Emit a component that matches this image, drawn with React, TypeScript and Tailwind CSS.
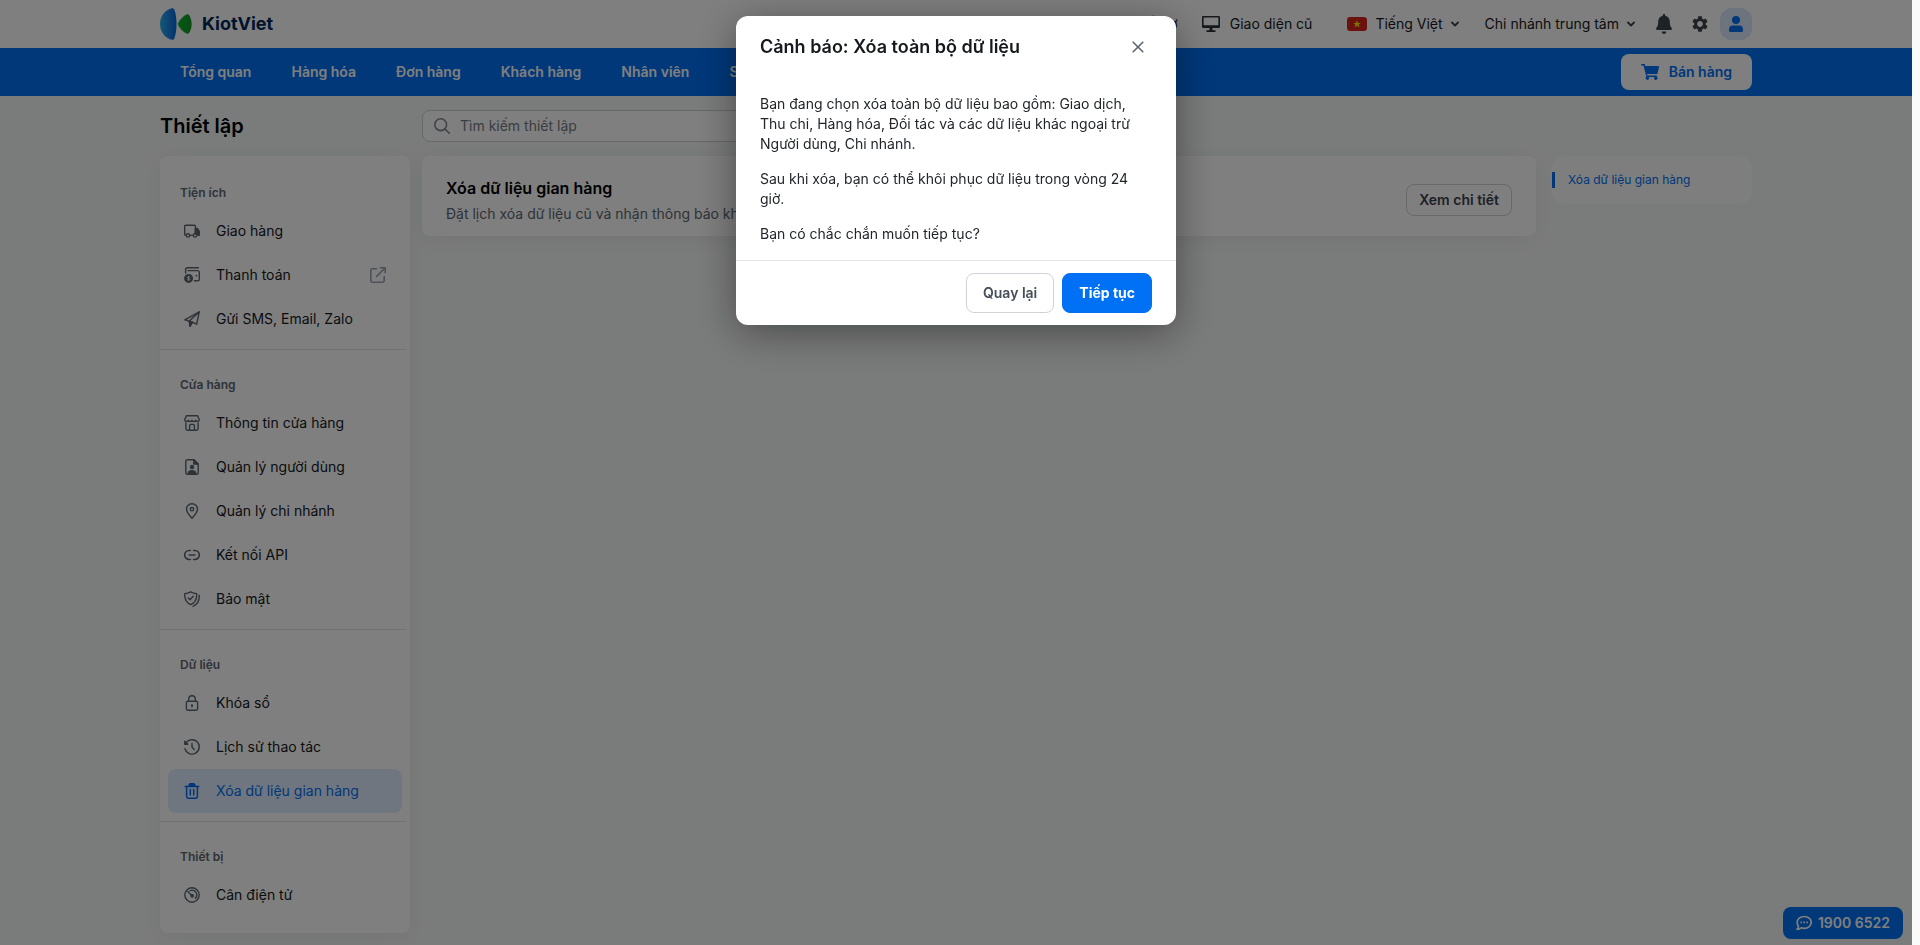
import React from 'react';

type IconProps = { className?: string };

const Stroke = ({ children, className = 'w-4 h-4' }: { children: React.ReactNode; className?: string }) => (
  <svg className={`${className} shrink-0`} viewBox="0 0 16 16" fill="none" stroke="currentColor" strokeWidth="1.4" strokeLinecap="round" strokeLinejoin="round" aria-hidden="true">
    {children}
  </svg>
);

const TruckIcon = () => (
  <Stroke>
    <path d="M2.2 12.4H1.7a1 1 0 0 1-1-1V3.200a1 1 0 0 1 1-1h8.700a1 1 0 0 1 1 1v8.400M5.800 12.400h3" />
    <path d="M11.400 5.400h2l1.900 3v3.800h-1.200l-2.700-1z" fill="currentColor" />
    <circle cx="4" cy="12.400" r="1.700" />
    <circle cx="11" cy="12.400" r="1.700" fill="#fff" />
  </Stroke>
);

const PaymentIcon = () => (
  <Stroke>
    <path d="M1.600 6V2.600a1.800 1.800 0 0 1 1.800-1.800h11M4 3.600h9.500a1.800 1.800 0 0 1 1.800 1.800v6.800a1.600 1.600 0 0 1-1.600 1.600h-3.300" />
    <path d="M12.200 8.800h.4" strokeWidth="1.600" />
    <circle cx="4.600" cy="11.400" r="3.800" fill="currentColor" />
    <path d="M5.800 10.200c-.5-.7-2.300-.6-2.300.3s2.300.7 2.300 1.800-1.900 1-2.400.3M4.600 9.200v4.400" stroke="#fff" strokeWidth=".8" />
  </Stroke>
);

const SendIcon = () => (
  <Stroke>
    <path d="M15.200.9 12.700 13.200 8.200 11.100 6 15.100 5.300 10.100.8 8.800z" />
    <path d="M15.200.9 5.300 10.100M8.200 11.100l-2.200 4" />
    <path d="M5.300 10.100 8.200 11.100 6 15.100z" fill="currentColor" />
  </Stroke>
);

const StoreIcon = () => (
  <Stroke>
    <path d="M2.400.8h11.200l1.700 4c0 2.200-3.100 2.200-3.700.4-.5 1.800-3.100 1.800-3.600 0-.5 1.800-3.100 1.800-3.600 0C3.800 7 .7 7 .7 4.800z" />
    <path d="M1.900 8v5.600a1.600 1.600 0 0 0 1.600 1.600h9a1.600 1.600 0 0 0 1.600-1.600V8M5.600 15v-4.400a1.200 1.200 0 0 1 1.200-1.200h2.400a1.200 1.200 0 0 1 1.200 1.200V15" />
  </Stroke>
);

const UserFileIcon = () => (
  <Stroke>
    <path d="M9.800.8H3.200a1.400 1.400 0 0 0-1.400 1.400v11.600a1.400 1.400 0 0 0 1.400 1.400h9.600a1.400 1.400 0 0 0 1.400-1.400V5z" />
    <path d="M9.800.8V5h4.400z" fill="currentColor" />
    <circle cx="8" cy="8" r="1.500" fill="currentColor" />
    <path d="M4.200 14.800c0-4.300 7.600-4.300 7.600 0z" fill="currentColor" />
  </Stroke>
);

const PinIcon = () => (
  <Stroke>
    <path d="M8 15.200C5 12 2.500 9.300 2.500 6.200a5.500 5.500 0 0 1 11 0c0 3.100-2.500 5.800-5.500 9z" />
    <circle cx="8" cy="6.200" r="1.700" />
  </Stroke>
);

const LinkIcon = () => (
  <Stroke>
    <path d="M6.400 3.500H5.200a4.500 4.500 0 0 0 0 9h1.200M9.600 3.500h1.200a4.500 4.500 0 0 1 0 9H9.600M5.200 8h5.600" strokeWidth="1.600" />
  </Stroke>
);

const ShieldIcon = () => (
  <Stroke>
    <path d="M6.700.8c1.800 1.100 3.700 1.700 5.900 1.800.5 4.900-1.200 8.900-5.900 11.100C2 11.400.3 7.400.8 2.600 3 2.500 4.900 1.900 6.700.8z" />
    <path d="M4.300 7.100 6 8.700l3.200-3.500M15.200 4.200c.3 5.300-1.700 9.200-6.100 11.100" />
  </Stroke>
);

const LockIcon = () => (
  <Stroke>
    <rect x="2.400" y="6.200" width="11.200" height="9" rx="1.400" />
    <path d="M4.700 6V4a3.300 3.300 0 0 1 6.600 0v2" />
    <path d="M8 10v1.400" strokeWidth="1.800" />
  </Stroke>
);

const HistoryIcon = () => (
  <Stroke>
    <path d="M1.500 4.800A7.200 7.200 0 1 1 1 9.600" />
    <path d="M.8 2.200v3h3z" fill="currentColor" />
    <path d="M8 4.400V8l2.200 2.600" />
  </Stroke>
);

const TrashIcon = () => (
  <Stroke>
    <path d="M1.200 3.400h13.600M2.600 3.400v10.200a1.600 1.600 0 0 0 1.600 1.600h7.600a1.600 1.600 0 0 0 1.600-1.600V3.400M6.300 6.600v5.400M9.700 6.600v5.400" strokeWidth="1.500" />
    <path d="M4.600 3.200 5.800.8h4.400l1.200 2.400z" fill="currentColor" />
  </Stroke>
);

const GaugeIcon = () => (
  <Stroke>
    <circle cx="8" cy="8" r="7.200" />
    <path d="M3.800 4.600 7.700 8.400M6.200 3.600a4.700 4.700 0 0 1 5.200 7.600" />
    <circle cx="8.200" cy="8.800" r="1.200" fill="currentColor" />
  </Stroke>
);

const ExternalIcon = ({ className }: IconProps) => (
  <Stroke className={className}>
    <path d="M6.400 1.800H2.200A1.400 1.400 0 0 0 .8 3.200v10.600a1.400 1.400 0 0 0 1.400 1.400h10.600a1.400 1.400 0 0 0 1.400-1.400V9.600M10.200.8h5v5M15 1 6.600 9.400" strokeWidth="1.600" />
  </Stroke>
);

const ChevronIcon = () => (
  <svg className="w-2 h-2 text-[#3c4249]" viewBox="0 0 8 8" fill="none" stroke="currentColor" strokeWidth="1.800" strokeLinecap="round" strokeLinejoin="round" aria-hidden="true">
    <path d="M1 2.500 4 5.500 7 2.500" />
  </svg>
);

const Logo = () => (
  <a href="#" className="flex items-center gap-2.5">
    <svg className="w-8 h-8" viewBox="0 0 32 32" aria-hidden="true">
      <defs>
        <linearGradient id="logoBlue" x1="0" y1="0" x2="1" y2="0">
          <stop offset="0" stopColor="#2bb0e8" />
          <stop offset="1" stopColor="#0a62e0" />
        </linearGradient>
        <linearGradient id="logoGreen" x1="0" y1="0" x2="1" y2="0">
          <stop offset="0" stopColor="#12b42a" />
          <stop offset="1" stopColor="#149424" />
        </linearGradient>
      </defs>
      <path d="M11.800.2C5.200 1.800 0 8 0 16s5.200 14.200 11.800 15.800c1.300.2 2.200-.4 2.600-1.600C15.800 26.500 16.500 21.500 16.500 16S15.800 5.500 14.400 1.800C14 .6 13.100 0 11.800.2z" fill="url(#logoBlue)" />
      <path d="M18.300 14.600c2.100-3.500 4.700-6.300 8.100-8.100 1.200-.6 2.300-.3 3 .9 3 5.500 3 11.700 0 17.200-.7 1.200-1.800 1.500-3 .9-3.400-1.800-6-4.600-8.100-8.100-.5-1-.5-1.800 0-2.800z" fill="url(#logoGreen)" />
    </svg>
    <span className="text-lg leading-6 font-bold text-[#00285a]">KiotViet</span>
  </a>
);

const navItems = ['Tổng quan', 'Hàng hóa', 'Đơn hàng', 'Khách hàng', 'Nhân viên', 'Sổ quỹ'];

const sections = [
  {
    title: 'Tiện ích',
    items: [
      { label: 'Giao hàng', Icon: TruckIcon },
      { label: 'Thanh toán', Icon: PaymentIcon, external: true },
      { label: 'Gửi SMS, Email, Zalo', Icon: SendIcon },
    ],
  },
  {
    title: 'Cửa hàng',
    items: [
      { label: 'Thông tin cửa hàng', Icon: StoreIcon },
      { label: 'Quản lý người dùng', Icon: UserFileIcon },
      { label: 'Quản lý chi nhánh', Icon: PinIcon },
      { label: 'Kết nối API', Icon: LinkIcon },
      { label: 'Bảo mật', Icon: ShieldIcon },
    ],
  },
  {
    title: 'Dữ liệu',
    items: [
      { label: 'Khóa sổ', Icon: LockIcon },
      { label: 'Lịch sử thao tác', Icon: HistoryIcon },
      { label: 'Xóa dữ liệu gian hàng', Icon: TrashIcon, active: true },
    ],
  },
  {
    title: 'Thiết bị',
    items: [{ label: 'Cân điện tử', Icon: GaugeIcon }],
  },
];

const TopBar = () => (
  <header className="bg-white">
    <div className="mx-auto flex h-12 max-w-[1592px] items-center justify-between">
      <Logo />
      <div className="flex items-center text-[#15181c]">
        <a href="#" className="mr-6">Hỗ trợ</a>
        <a href="#" className="mr-[35px] flex items-center gap-2.5">
          <svg className="w-[18px] h-4 text-[#2b3038]" viewBox="0 0 18 16" fill="currentColor" aria-hidden="true">
            <path fillRule="evenodd" d="M1.200 0h15.600A1.200 1.200 0 0 1 18 1.200v9.600a1.200 1.200 0 0 1-1.200 1.200h-6.300v2.200h3V16h-9v-1.800h3V12H1.200A1.200 1.200 0 0 1 0 10.800V1.200A1.200 1.200 0 0 1 1.200 0zm.4 1.500v7.800h14.800V1.500z" />
          </svg>
          Giao diện cũ
        </a>
        <button type="button" className="mr-[26px] flex items-center">
          <svg className="mr-2 w-5 h-3.5" viewBox="0 0 20 14" aria-hidden="true">
            <rect width="20" height="14" rx="3" fill="#d8251d" />
            <path d="m10 3.200 1 2.700h2.800l-2.200 1.700.8 2.800-2.400-1.700-2.400 1.700.8-2.800-2.200-1.700H9z" fill="#ffe600" />
          </svg>
          <span className="mr-2">Tiếng Việt</span>
          <ChevronIcon />
        </button>
        <button type="button" className="mr-[21px] flex items-center gap-2">
          Chi nhánh trung tâm
          <ChevronIcon />
        </button>
        <button type="button" aria-label="Thông báo" className="mr-5 text-[#3c434c]">
          <svg className="w-4 h-5" viewBox="0 0 16 20" fill="currentColor" aria-hidden="true">
            <path d="M8 0c.8 0 1.200.5 1.200 1.200v.6c2.800.6 4.600 2.900 4.600 5.700 0 4.200 1 5.400 1.900 6.500.7.900.2 2-1 2H1.300c-1.200 0-1.700-1.100-1-2 .9-1.100 1.900-2.300 1.900-6.500 0-2.800 1.800-5.100 4.600-5.700v-.6C6.800.5 7.200 0 8 0zM5.700 17.500h4.600C10.300 19 9.300 20 8 20s-2.300-1-2.300-2.500z" />
          </svg>
        </button>
        <button type="button" aria-label="Cài đặt" className="mr-3 text-[#3c434c]">
          <svg className="w-4 h-4" viewBox="2 2 20 20" fill="currentColor" aria-hidden="true">
            <path d="M19.140 12.940c.04-.3.06-.61.06-.94 0-.32-.02-.64-.07-.94l2.030-1.580c.18-.14.23-.41.12-.61l-1.920-3.320c-.12-.22-.37-.29-.59-.22l-2.390.96c-.5-.38-1.030-.7-1.620-.94l-.36-2.540c-.04-.24-.24-.41-.48-.41h-3.840c-.24 0-.43.17-.47.41l-.36 2.540c-.59.24-1.130.57-1.620.94l-2.390-.96c-.22-.08-.47 0-.59.22L2.740 8.870c-.12.210-.08.470.12.610l2.030 1.580c-.05.3-.09.63-.09.94s.02.64.07.94l-2.030 1.580c-.18.14-.23.41-.12.61l1.920 3.320c.12.22.37.29.59.22l2.390-.96c.5.38 1.030.7 1.620.94l.36 2.540c.05.24.24.41.48.41h3.840c.24 0 .44-.17.47-.41l.36-2.540c.59-.24 1.130-.56 1.620-.94l2.390.96c.22.08.47 0 .59-.22l1.920-3.320c.12-.22.07-.47-.12-.61l-2.010-1.580zM12 15.600c-1.980 0-3.600-1.620-3.600-3.600s1.620-3.600 3.600-3.600 3.600 1.620 3.600 3.600-1.620 3.600-3.600 3.600z" />
          </svg>
        </button>
        <button type="button" aria-label="Tài khoản" className="flex size-8 items-center justify-center rounded-xl bg-[#dde8fa] text-[#0070f4]">
          <svg className="w-3.5 h-4" viewBox="0 0 14 16" fill="currentColor" aria-hidden="true">
            <circle cx="7" cy="4" r="4" />
            <path d="M4 9.500h6a4 4 0 0 1 4 4v1A1.500 1.500 0 0 1 12.500 16h-11A1.500 1.500 0 0 1 0 14.500v-1a4 4 0 0 1 4-4z" />
          </svg>
        </button>
      </div>
    </div>
  </header>
);

const NavBar = () => (
  <nav className="bg-[#0070f4]">
    <div className="mx-auto flex h-12 max-w-[1592px] items-center justify-between">
      <div className="flex">
        {navItems.map((item) => (
          <a key={item} href="#" className="px-5 font-semibold text-white">{item}</a>
        ))}
      </div>
      <button type="button" className="flex h-9 items-center gap-2.5 rounded-lg bg-white px-5 font-semibold text-[#0070f4]">
        <svg className="w-[18px] h-4" viewBox="0 0 18 16" fill="currentColor" aria-hidden="true">
          <path d="M.7 0h2.500c.4 0 .7.200.8.600L4.300 2h12.900c.5 0 .9.500.8 1l-1.500 6.500c-.1.400-.4.600-.8.600H6l.3 1.400h9c.5 0 .8.400.7.900l-.1.400a1.700 1.700 0 1 1-2.400.200H7.600a1.700 1.700 0 1 1-2.200-.3L2.500 1.500H.7A.7.700 0 0 1 0 .8C0 .3.300 0 .7 0z" />
        </svg>
        Bán hàng
      </button>
    </div>
  </nav>
);

const Sidebar = () => (
  <aside className="w-[250px] shrink-0 rounded-lg bg-white pt-0.5 pr-1 pb-2 shadow-[0_4px_24px_rgba(0,0,0,0.06)]">
    {sections.map((section, index) => (
      <section key={section.title} className={index > 0 ? 'border-t border-[#e3e5e8] pt-[27px] pb-2' : 'pt-[27px] pb-2'}>
        <h2 className="mb-2 px-5 text-xs font-semibold text-[#5c6670]">{section.title}</h2>
        <ul className="pr-1 pl-2">
          {section.items.map(({ label, Icon, external, active }: { label: string; Icon: React.FC; external?: boolean; active?: boolean }) => (
            <li key={label}>
              <a
                href="#"
                className={
                  active
                    ? 'flex h-11 items-center gap-4 rounded-lg bg-[#e1ecff] px-4 text-[#0070f4]'
                    : 'flex h-11 items-center gap-4 rounded-lg px-4 text-[#15181c]'
                }
              >
                <span className={active ? '' : 'text-[#5c6670]'}><Icon /></span>
                <span className="flex-1">{label}</span>
                {external && <ExternalIcon className="w-4 h-4 text-[#9ca3af]" />}
              </a>
            </li>
          ))}
        </ul>
      </section>
    ))}
  </aside>
);

const ConfirmDialog = () => (
  <div
    role="dialog"
    aria-modal="true"
    aria-labelledby="dialog-title"
    className="w-[440px] rounded-xl bg-white text-[#22262b] shadow-[0_8px_40px_rgba(0,0,0,0.4)]"
  >
    <div className="flex h-[62px] items-center justify-between px-6">
      <h2 id="dialog-title" className="text-lg font-semibold text-[#15181c]">Cảnh báo: Xóa toàn bộ dữ liệu</h2>
      <button type="button" aria-label="Đóng" className="flex size-7 items-center justify-center text-[#5c6670]">
        <svg className="size-3" viewBox="0 0 12 12" fill="none" stroke="currentColor" strokeWidth="1.600" strokeLinecap="round" aria-hidden="true">
          <path d="m1.200 1.200 9.600 9.600M10.800 1.200l-9.600 9.600" />
        </svg>
      </button>
    </div>
    <div className="space-y-[15px] px-6 py-4">
      <p>Bạn đang chọn xóa toàn bộ dữ liệu bao gồm: Giao dịch, Thu chi, Hàng hóa, Đối tác và các dữ liệu khác ngoại trừ Người dùng, Chi nhánh.</p>
      <p>Sau khi xóa, bạn có thể khôi phục dữ liệu trong vòng 24 giờ.</p>
      <p>Bạn có chắc chắn muốn tiếp tục?</p>
    </div>
    <div className="flex justify-end gap-2 border-t border-[#e3e5ea] px-6 py-3">
      <button type="button" className="h-10 rounded-lg border border-[#d0d3da] px-4 font-semibold text-[#464e57]">Quay lại</button>
      <button type="button" className="h-10 rounded-lg border border-[#0070f4] bg-[#0070f4] px-4 font-bold text-white">Tiếp tục</button>
    </div>
  </div>
);

const App = () => {
  return (
    <div className="min-h-screen bg-[#fafafa] pr-2 font-[Inter,'Liberation_Sans',sans-serif] text-sm">
      <div className="min-h-screen bg-[#f5f8f6]">
        <TopBar />
        <NavBar />

        <main className="mx-auto max-w-[1592px] pb-3">
          <div className="flex h-15 items-center">
            <h1 className="w-[262px] text-xl font-semibold text-black">Thiết lập</h1>
            <label className="flex h-8 w-[500px] items-center gap-2.5 rounded-lg border border-[#cdd0d4] bg-white px-[11px]">
              <svg className="size-4 text-[#7c858f]" viewBox="0 0 16 16" fill="none" stroke="currentColor" strokeWidth="1.600" strokeLinecap="round" aria-hidden="true">
                <circle cx="6.700" cy="6.700" r="5.900" />
                <path d="m11 11 4.300 4.300" />
              </svg>
              <input type="text" aria-label="Tìm kiếm thiết lập" placeholder="Tìm kiếm thiết lập" className="flex-1 outline-none placeholder:text-[#757b82]" />
            </label>
          </div>

          <div className="flex items-start">
            <Sidebar />
            <section className="ml-3 flex flex-1 items-center justify-between rounded-lg bg-white px-6 pt-5 pb-3 shadow-[0_4px_24px_rgba(0,0,0,0.06)]">
              <div>
                <h2 className="text-base leading-6 font-semibold text-black">Xóa dữ liệu gian hàng</h2>
                <p className="mt-1 text-[#5c6670]">Đặt lịch xóa dữ liệu cũ và nhận thông báo khi hoàn tất</p>
              </div>
              <button type="button" className="h-8 rounded-lg border border-[#cdd0d8] px-3 font-semibold text-[#3c434c]">Xem chi tiết</button>
            </section>
            <div className="ml-4 w-[200px] rounded-xl bg-[#fcfcfc] py-4">
              <a href="#" className="block rounded-r-xs border-l-3 border-[#0070f4] pl-[13px] text-xs text-[#0070f4]">Xóa dữ liệu gian hàng</a>
            </div>
          </div>
        </main>
      </div>

      {/* Hotline */}
      <button type="button" className="fixed right-[17px] bottom-1.5 flex h-8 items-center gap-1.5 rounded-lg bg-[#0070f4] px-[13px] font-semibold text-white">
        <svg className="size-4" viewBox="0 0 16 16" fill="none" stroke="currentColor" strokeWidth="1.700" strokeLinejoin="round" aria-hidden="true">
          <path d="M8.200 1.500c4 0 7 2.600 7 5.900s-3 5.900-7 5.900c-1 0-2-.2-2.900-.5-1.100.9-2.600 1.500-4.300 1.500.9-1 1.400-2 1.600-3C1.700 10.300 1.200 8.900 1.200 7.400c0-3.300 3-5.900 7-5.900z" />
          <path d="M4.500 7.400h1.600M7.400 7.400H9M10.300 7.400h1.600" />
        </svg>
        1900 6522
      </button>

      {/* Overlay + dialog */}
      <div className="fixed inset-y-0 right-2 left-0 flex items-start justify-center overflow-hidden bg-black/50 pt-4">
        <ConfirmDialog />
      </div>
    </div>
  );
};

export default App;
